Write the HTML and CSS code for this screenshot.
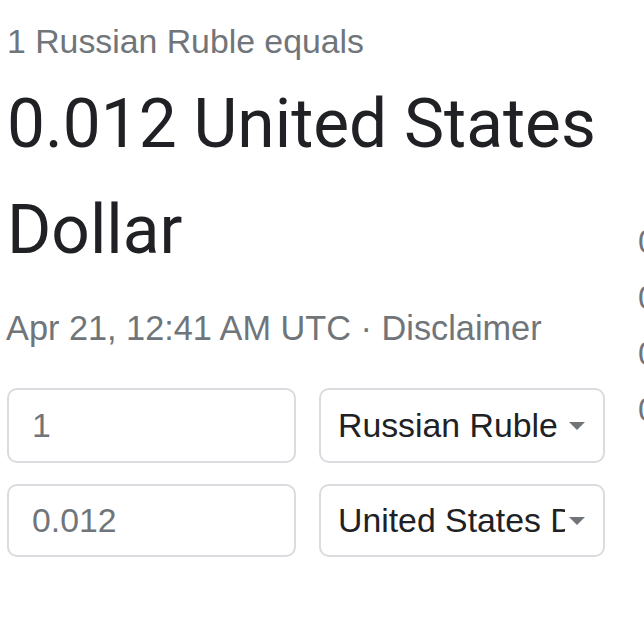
FILE: index.html
```html
<!DOCTYPE html>
<html>
<head>
<meta charset="utf-8">
<link rel="stylesheet" href="styles.css">
</head>
<body>
<div class="widget">
  <div class="main">
    <div class="label">1 Russian Ruble equals</div>
    <div class="result">0.012 United States Dollar</div>
    <div class="meta">Apr 21, 12:41 AM UTC · <span class="disclaimer">Disclaimer</span></div>
    <div class="converter">
      <div class="amount">1</div>
      <div class="select"><span class="select-text">Russian Ruble</span><span class="caret"></span></div>
      <div class="amount">0.012</div>
      <div class="select"><span class="select-text">United States Dollar</span><span class="caret"></span></div>
    </div>
  </div>
  <div class="chart">
    <div class="axis-label">0.0130</div>
    <div class="axis-label">0.0125</div>
    <div class="axis-label">0.0120</div>
    <div class="axis-label">0.0115</div>
  </div>
</div>
</body>
</html>
```
FILE: styles.css
```css
html, body {
  margin: 0;
  padding: 0;
  background: #fff;
  overflow: hidden;
}
.widget {
  display: flex;
  width: 900px;
  font-family: "Liberation Sans", Arial, sans-serif;
}
.main {
  width: 614px;
  flex: none;
  padding: 17px 0 0 7px;
}
.label {
  font-size: 33.8px;
  line-height: 48px;
  color: #70757a;
}
.result {
  margin-top: 6px;
  font-family: Roboto, "Liberation Sans", sans-serif;
  font-size: 67.6px;
  line-height: 106px;
  color: #202124;
}
.meta {
  margin-top: 21px;
  margin-left: -1px;
  font-size: 34.3px;
  line-height: 48px;
  color: #70757a;
}
.converter {
  margin-top: 36px;
  display: grid;
  grid-template-columns: 289px 286px;
  grid-template-rows: 75px 73px;
  column-gap: 23px;
  row-gap: 21px;
}
.amount, .select {
  box-sizing: border-box;
  border: 2.5px solid #dadce0;
  border-radius: 10px;
  display: flex;
  align-items: center;
  font-size: 33.8px;
}
.amount {
  padding-left: 23px;
  color: #70757a;
}
.select {
  padding-left: 17px;
  padding-right: 18px;
  color: #202124;
}
.select-text {
  flex: 1;
  min-width: 0;
  overflow: hidden;
  white-space: nowrap;
}
.caret {
  flex: none;
  width: 0;
  height: 0;
  margin-left: 4px;
  border-left: 8px solid transparent;
  border-right: 8px solid transparent;
  border-top: 8px solid #70757a;
}
.chart {
  flex: none;
  padding-left: 17px;
  padding-top: 218px;
  display: flex;
  flex-direction: column;
  gap: 8px;
}
.axis-label {
  font-size: 33px;
  line-height: 48px;
  color: #70757a;
}
```
